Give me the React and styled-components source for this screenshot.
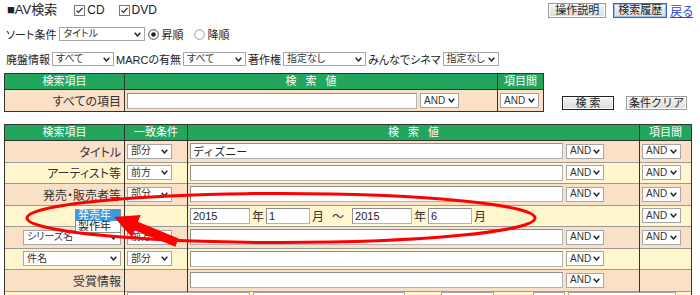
import styled, { createGlobalStyle } from "styled-components";

const PEACH = "#fbe0c8";
const CREAM = "#fff6ce";
const GREEN = "#22a55c";

const GlobalStyle = createGlobalStyle`
  html, body {
    margin: 0;
    padding: 0;
    overflow: hidden;
    background: #fff;
  }
  body {
    font-family: "Liberation Sans", "Noto Sans CJK JP", sans-serif;
    font-size: 12px;
    color: #222;
    font-feature-settings: "palt";
  }
`;

const Page = styled.div`
  position: relative;
  width: 700px;
  height: 295px;
  overflow: hidden;
`;

const TopBar = styled.div`
  display: flex;
  align-items: center;
  height: 16px;
  margin-top: 2px;
  padding: 0 7px;
`;

const Title = styled.span`
  font-size: 13px;
  line-height: 14px;
  margin-right: 17px;
`;

const Check = styled.label`
  display: flex;
  align-items: center;
  gap: 2px;
  font-size: 12px;
  margin-right: ${(p) => p.$mr || 0}px;
`;

const RightGroup = styled.div`
  margin-left: auto;
  display: flex;
  align-items: center;
`;

const Button = styled.button`
  box-sizing: border-box;
  width: ${(p) => p.$w}px;
  height: ${(p) => p.$h || 15}px;
  margin: 0 0 0 ${(p) => p.$ml || 0}px;
  padding: 0;
  font-family: inherit;
  font-size: 11px;
  line-height: 11px;
  color: #222;
  background: linear-gradient(#f4f4f4, #dcdcdc);
  border: 1px solid ${(p) => (p.$focus ? "#2f63cf" : p.$strong ? "#222" : "#9a9a9a")};
  box-shadow: ${(p) => (p.$focus ? "inset 0 0 0 1px #9cc0f0" : "inset 0 0 0 1px #fff")};
  white-space: pre;
`;

const BackLink = styled.a`
  margin-left: 3px;
  font-size: 12px;
  color: #1f46d4;
  text-decoration: underline;
`;

const FilterLine = styled.div`
  display: flex;
  align-items: center;
  height: 14px;
  margin-top: ${(p) => p.$mt}px;
  padding-left: 6px;
  gap: ${(p) => p.$gap || 3}px;
  font-size: 11px;
`;

const Radio = styled.label`
  display: flex;
  align-items: center;
  gap: 2px;
  font-size: 11px;
  margin-left: ${(p) => p.$ml || 0}px;
`;

const SelectBox = styled.div`
  box-sizing: border-box;
  flex: none;
  width: ${(p) => p.$w}px;
  height: ${(p) => p.$h || 15}px;
  border: 1px solid #a6a6a6;
  background: #fff;
  display: flex;
  align-items: center;
  justify-content: space-between;
  padding: 0 3px 0 3px;
  font-size: 10px;
  line-height: 12px;
  color: #333;
  white-space: nowrap;
  overflow: hidden;
`;

const TextBox = styled.input`
  box-sizing: border-box;
  flex: none;
  width: ${(p) => p.$w}px;
  height: 16px;
  margin: 0;
  padding: 0 2px;
  border: 1px solid #b4b4b4;
  border-top-color: #8e8e8e;
  border-left-color: #8e8e8e;
  background: #fff;
  font-family: inherit;
  font-size: 11px;
  color: #222;
  outline: none;
`;

const TableWrap = styled.div`
  display: flex;
  align-items: flex-start;
  margin-top: ${(p) => p.$mt}px;
  padding-left: 4px;
`;

const Grid = styled.table`
  border-collapse: collapse;
  table-layout: fixed;
  border: 1px solid #333;
`;

const Col = styled.col`
  width: ${(p) => p.$w}px;
`;

const Th = styled.th`
  height: 15px;
  padding: 0;
  background: ${GREEN};
  color: #fff;
  font-weight: normal;
  font-size: 11px;
  line-height: 15px;
  border: 1px solid #333;
  text-align: center;
  word-spacing: ${(p) => p.$ws || 0}px;
`;

const Td = styled.td`
  height: ${(p) => p.$h || 20.5}px;
  padding: 0 ${(p) => p.$pr ?? 2}px 0 ${(p) => p.$pl ?? 2}px;
  background: ${(p) => p.$bg};
  border-left: 1px solid #333;
  border-right: 1px solid #333;
  border-top: 1px solid #9a9a9a;
  text-align: ${(p) => p.$align || "left"};
  vertical-align: ${(p) => p.$valign || "middle"};
  font-size: 12px;
  color: #333;
  white-space: nowrap;
`;

const Cell = styled.div`
  display: flex;
  align-items: center;
  justify-content: ${(p) => p.$justify || "flex-start"};
  gap: ${(p) => p.$gap ?? 3}px;
`;

const Unit = styled.span`
  font-size: 12px;
  margin: 0 ${(p) => p.$m || 0}px;
`;

const SideButtons = styled.div`
  display: flex;
  margin: 23px 0 0 18px;
`;

const Stub = styled.div`
  box-sizing: border-box;
  flex: none;
  width: ${(p) => p.$w}px;
  height: 16px;
  margin-left: ${(p) => p.$ml || 0}px;
  border: 1px solid #a6a6a6;
  background: #fff;
`;

const Popup = styled.ul`
  position: absolute;
  left: 75px;
  top: 209px;
  width: 44px;
  margin: 0;
  padding: 0;
  list-style: none;
  border: 1px solid #8a8a8a;
  background: #fff;
  font-size: 11px;
  z-index: 2;
`;

const PopOption = styled.li`
  height: 11px;
  line-height: 11px;
  padding: 0 2px;
  background: ${(p) => (p.$active ? "#3c98e4" : "#fff")};
  color: ${(p) => (p.$active ? "#fff" : "#222")};
`;

const Markup = styled.svg`
  position: absolute;
  left: 0;
  top: 0;
  pointer-events: none;
  z-index: 3;
`;

function Chevron() {
  return (
    <svg width="7" height="5" viewBox="0 0 7 5">
      <polyline points="0.7,0.8 3.5,3.9 6.3,0.8" fill="none" stroke="#222" strokeWidth="1.5" />
    </svg>
  );
}

function Select({ w, h, children }) {
  return (
    <SelectBox $w={w} $h={h}>
      <span>{children}</span>
      <Chevron />
    </SelectBox>
  );
}

function CheckMark() {
  return (
    <svg width="11" height="11" viewBox="0 0 11 11">
      <rect x="0.5" y="0.5" width="10" height="10" fill="#fff" stroke="#777" />
      <polyline points="2.5,5.5 4.5,7.5 8.5,3" fill="none" stroke="#333" strokeWidth="1.2" />
    </svg>
  );
}

function RadioMark({ on }) {
  return (
    <svg width="11" height="11" viewBox="0 0 11 11">
      <circle cx="5.5" cy="5.5" r="4.8" fill="#fff" stroke={on ? "#444" : "#999"} />
      {on && <circle cx="5.5" cy="5.5" r="2.3" fill="#222" />}
    </svg>
  );
}

function And({ w = 38 }) {
  return <Select w={w}>AND</Select>;
}

const rows = [
  { label: "タイトル", match: "部分", value: "ディズニー", link: true, bg: PEACH },
  { label: "アーティスト等", match: "前方", value: "", link: true, bg: CREAM },
  { label: "発売・販売者等", match: "部分", value: "", link: true, bg: PEACH },
  { date: true, link: true, bg: CREAM },
  { pick: "シリーズ名", match: "前方", value: "", link: true, bg: PEACH },
  { pick: "件名", match: "部分", value: "", link: false, bg: CREAM },
  { label: "受賞情報", value: "", link: false, bg: PEACH },
];

function DateRange() {
  return (
    <Cell $gap={2}>
      <TextBox $w={60} defaultValue="2015" />
      <Unit>年</Unit>
      <TextBox $w={44} defaultValue="1" />
      <Unit>月</Unit>
      <Unit $m={6}>～</Unit>
      <TextBox $w={60} defaultValue="2015" />
      <Unit>年</Unit>
      <TextBox $w={44} defaultValue="6" />
      <Unit>月</Unit>
    </Cell>
  );
}

function SearchRow({ row }) {
  return (
    <tr>
      <Td $bg={row.bg} $align="right" $pr={3}>
        {row.pick ? (
          <Cell $justify="flex-end">
            <Select w={98}>{row.pick}</Select>
          </Cell>
        ) : (
          row.label
        )}
      </Td>
      <Td $bg={row.bg}>{row.match && <Select w={45}>{row.match}</Select>}</Td>
      <Td $bg={row.bg}>
        {row.date ? (
          <DateRange />
        ) : (
          <Cell>
            <TextBox $w={373} defaultValue={row.value} />
            <And />
          </Cell>
        )}
      </Td>
      <Td $bg={row.bg}>{row.link && <And w={39} />}</Td>
    </tr>
  );
}

export default function App() {
  return (
    <Page>
      <GlobalStyle />
      <TopBar>
        <Title>■AV検索</Title>
        <Check $mr={14}>
          <CheckMark />
          CD
        </Check>
        <Check>
          <CheckMark />
          DVD
        </Check>
        <RightGroup>
          <Button $w={58}>操作説明</Button>
          <Button $w={54} $ml={7} $focus>
            検索履歴
          </Button>
          <BackLink href="#">戻る</BackLink>
        </RightGroup>
      </TopBar>

      <FilterLine $mt={9}>
        ソート条件
        <Select w={86} h={14}>
          タイトル
        </Select>
        <Radio>
          <RadioMark on />
          昇順
        </Radio>
        <Radio $ml={8}>
          <RadioMark />
          降順
        </Radio>
      </FilterLine>

      <FilterLine $mt={11} $gap={2}>
        廃盤情報
        <Select w={62} h={14}>
          すべて
        </Select>
        MARCの有無
        <Select w={63} h={14}>
          すべて
        </Select>
        著作権
        <Select w={83} h={14}>
          指定なし
        </Select>
        みんなでシネマ
        <Select w={56} h={14}>
          指定なし
        </Select>
      </FilterLine>

      <TableWrap $mt={7}>
        <Grid>
          <colgroup>
            <Col $w={120} />
            <Col $w={373} />
            <Col $w={46} />
          </colgroup>
          <thead>
            <tr>
              <Th>検索項目</Th>
              <Th $ws={6}>検 索 値</Th>
              <Th>項目間</Th>
            </tr>
          </thead>
          <tbody>
            <tr>
              <Td $bg={PEACH} $align="right" $pr={3} $h={21}>
                すべての項目
              </Td>
              <Td $bg={PEACH}>
                <Cell>
                  <TextBox $w={290} />
                  <And w={39} />
                </Cell>
              </Td>
              <Td $bg={PEACH}>
                <And w={39} />
              </Td>
            </tr>
          </tbody>
        </Grid>
        <SideButtons>
          <Button $w={52} $h={14} $strong>
            {"検 索"}
          </Button>
          <Button $w={61} $h={14} $ml={12}>
            条件クリア
          </Button>
        </SideButtons>
      </TableWrap>

      <TableWrap $mt={12}>
        <Grid>
          <colgroup>
            <Col $w={120} />
            <Col $w={63} />
            <Col $w={452} />
            <Col $w={52} />
          </colgroup>
          <thead>
            <tr>
              <Th>検索項目</Th>
              <Th>一致条件</Th>
              <Th $ws={6}>検 索 値</Th>
              <Th>項目間</Th>
            </tr>
          </thead>
          <tbody>
            {rows.map((row, i) => (
              <SearchRow key={i} row={row} />
            ))}
            <tr>
              <Td $bg={CREAM} />
              <Td $bg={CREAM} colSpan={3} $valign="top">
                <Cell $gap={0}>
                  <Stub $w={123} $ml={0} />
                  <Stub $w={152} $ml={3} />
                  <Stub $w={53} $ml={36} />
                  <Stub $w={32} $ml={39} />
                  <Stub $w={108} $ml={3} />
                </Cell>
              </Td>
            </tr>
          </tbody>
        </Grid>
      </TableWrap>

      <Popup>
        <PopOption $active>発売年</PopOption>
        <PopOption>製作年</PopOption>
      </Popup>

      <Markup width="700" height="295" viewBox="0 0 700 295">
        <ellipse cx="281" cy="218" rx="254" ry="24.5" fill="none" stroke="#f00" strokeWidth="3" />
        <polygon
          points="114,217 140.7,214.9 137.9,221.8 178.7,238.4 175.3,246.8 134.5,230.2 131.7,237.1"
          fill="#f00"
        />
      </Markup>
    </Page>
  );
}
